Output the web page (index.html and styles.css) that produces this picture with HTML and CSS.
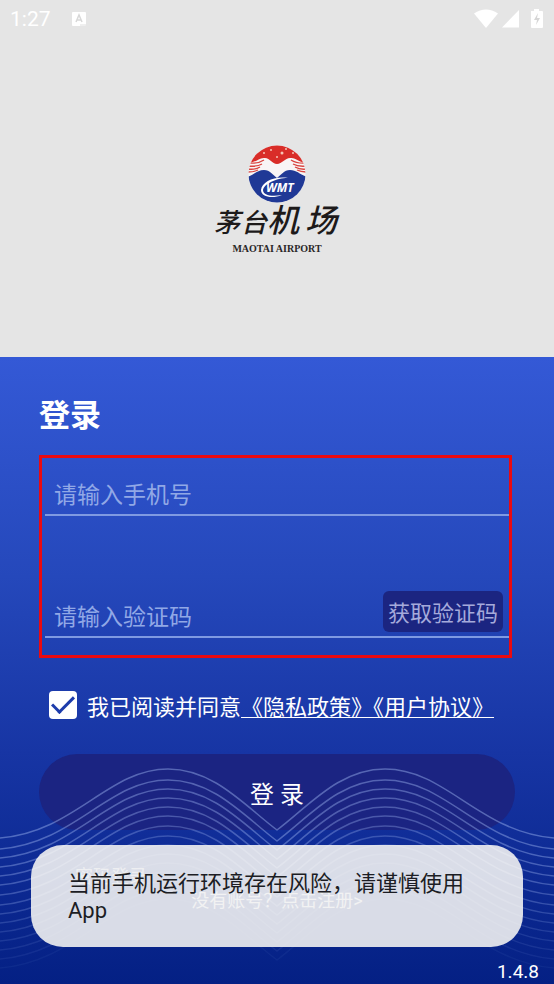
FILE: index.html
```html
<!DOCTYPE html>
<html lang="zh-CN">

<head>
    <meta charset="UTF-8" />
    <meta name="viewport" content="width=device-width, initial-scale=1.0" />
    <title>登录</title>
    <link rel="stylesheet" href="styles.css">
</head>

<body>
    <header class="top">
        <div class="status-bar">
            <span class="time">1:27</span>
            <svg class="app-icon" width="16" height="16" viewBox="0 0 16 16">
                <rect x="1" y="1" width="14" height="14" rx="1" fill="#fff" />
                <path d="M5 11 L8 4 L11 11 M6 9 H10" fill="none" stroke="#d8d8d8" stroke-width="1.5" />
                <path d="M9 14 H15" stroke="#dedede" />
            </svg>
            <svg class="signals" width="70" height="20" viewBox="0 0 70 20">
                <path d="M0 4.500 Q12 -3.500 24 4.500 L12 19 Z" fill="#fff" />
                <path d="M28 18.500 L45 1 V18.500 Z" fill="#fff" />
                <path d="M57 2 H60 V0 H65 V2 H68 Q69 2 69 3 V18 Q69 19 68 19 H58 Q57 19 57 18 V3 Z" fill="#fff" />
                <path d="M64 4 L60 11 H63 L62 16 L66 9 H63 Z" fill="#d6d6d6" />
            </svg>
        </div>
        <svg class="logo" width="132" height="112" viewBox="0 0 132 112">
            <defs>
                <clipPath id="ball"><circle cx="66" cy="30" r="28.500" /></clipPath>
            </defs>
            <g clip-path="url(#ball)">
                <rect x="36" y="0" width="60" height="60" fill="#f8f5f5" />
                <!-- sky -->
                <path d="M36 0 H97 V18 C88 20 86 13 79 14 C74 14 71 20 66 20 C61 20 59 14 54 14 C47 13 45 20 36 18 Z" fill="#d92d28" />
                <g fill="none" stroke="#d9453f" stroke-width="1.300">
                    <path d="M37 19 Q47 20 53 16 M37 22 Q46 23 51 20 M37 25 Q44 26 49 23 M37 28 Q43 28 47 26" />
                    <path d="M96 19 Q86 20 80 16 M96 22 Q87 23 82 20 M96 25 Q89 26 84 23 M96 28 Q90 28 86 26" />
                </g>
                <!-- mountains -->
                <path d="M36 33 C43 31 46 26 53 26 C59 26 62 31 66 34 C70 31 73 26 79 26 C86 26 89 31 97 33 V60 H36 Z" fill="#203996" />
                <g fill="#f6c4b5">
                    <circle cx="53" cy="9" r="1" />
                    <circle cx="60" cy="6" r="1" />
                    <circle cx="71" cy="9" r="1.500" />
                    <circle cx="75" cy="5" r="1" />
                    <circle cx="82" cy="9" r="1" />
                    <circle cx="66" cy="13" r="1" />
                </g>
                <path d="M77 34 C63 32 51 38 50 46 C50 53 61 55 71 51 C60 53 52 51 52 46 C53 40 65 34 77 34 Z" fill="#fff" />
            </g>
            <text class="logo-mark" x="55" y="48">WMT</text>
            <text class="logo-cn" y="88"><tspan x="3">茅</tspan><tspan x="30">台</tspan><tspan class="logo-cn-big" x="56">机</tspan><tspan class="logo-cn-big" x="94">场</tspan></text>
            <text class="logo-en" x="66" y="108">MAOTAI AIRPORT</text>
        </svg>
    </header>

    <main class="panel">
        <h1 class="title">登录</h1>
        <form>
            <div class="fields">
                <div class="field">
                    <input class="field-input" type="tel" placeholder="请输入手机号" aria-label="请输入手机号" />
                </div>
                <div class="field">
                    <input class="field-input" type="text" placeholder="请输入验证码" aria-label="请输入验证码" />
                    <button class="code-btn" type="button">获取验证码</button>
                </div>
            </div>
            <div class="agree">
                <input class="agree-check" type="checkbox" id="agree" checked />
                <label for="agree">我已阅读并同意</label><a class="agree-link" href="#">《隐私政策》《用户协议》</a>
            </div>
            <button class="login-btn" type="submit">登 录</button>
        </form>
        <a class="switch-link" href="#">密码登录</a>
        <a class="register-link" href="#">没有账号？点击注册&gt;</a>
        <div class="version">1.4.8</div>

        <svg class="waves" viewBox="0 0 554 230" preserveAspectRatio="none">
            <defs>
                <path id="wave" d="M0 84 C75 78 108 15 168 15 C214 15 245 52 277 76 C309 52 339 15 385 15 C446 15 479 78 554 84" />
            </defs>
            <g fill="none" stroke="#9db4f0" stroke-width="1.500">
                <use href="#wave" opacity="0.460" />
                <use href="#wave" y="11" opacity="0.440" />
                <use href="#wave" y="20" opacity="0.420" />
                <use href="#wave" y="29" opacity="0.400" />
                <use href="#wave" y="38" opacity="0.380" />
                <use href="#wave" y="47" opacity="0.360" />
                <use href="#wave" y="57" opacity="0.330" />
                <use href="#wave" y="67" opacity="0.300" />
                <use href="#wave" y="76" opacity="0.260" />
                <use href="#wave" y="85" opacity="0.220" />
                <use href="#wave" y="94" opacity="0.180" />
                <use href="#wave" y="103" opacity="0.150" />
                <use href="#wave" y="112" opacity="0.120" />
                <use href="#wave" y="121" opacity="0.090" />
                <use href="#wave" y="130" opacity="0.060" />
            </g>
        </svg>
        <div class="toast" role="alert">当前手机运行环境存在风险，请谨慎使用App</div>
    </main>
</body>

</html>
```
FILE: styles.css
```css
* {
    box-sizing: border-box;
}

body {
    margin: 0;
    min-height: 100vh;
    display: flex;
    flex-direction: column;
    background-color: #e5e5e5;
    color: white;
    font-family: Roboto, "Noto Sans CJK SC", sans-serif;
}

input,
button {
    font-family: inherit;
    color: inherit;
    border: none;
    outline: none;
}

a {
    color: inherit;
    text-decoration: none;
}

/* status bar + logo */
.top {
    display: flex;
    flex-direction: column;
    align-items: center;
    padding-bottom: 101px;
}

.status-bar {
    align-self: stretch;
    display: flex;
    align-items: center;
    height: 38px;
    padding: 0 10px;
}

.time {
    font-size: 21px;
}

.app-icon {
    margin-left: 20px;
}

.signals {
    margin-left: auto;
}

.logo {
    margin-top: 106px;
    overflow: visible;
}

.logo-mark {
    fill: white;
    font: italic bold 12px "Open Sans", sans-serif;
}

.logo-cn {
    fill: #1d1a1a;
    font: italic 500 26px STXingkai, "Noto Sans CJK SC", cursive;
}

.logo-cn-big {
    font-size: 32px;
}

.logo-en {
    fill: #2a2727;
    font: bold 10px "Liberation Serif", serif;
    text-anchor: middle;
}

/* login */
.panel {
    position: relative;
    flex: 1;
    display: flex;
    flex-direction: column;
    padding: 39px 39px 0;
    background: linear-gradient(#3459d6, #2548bb 35%, #1735a4 63%, #042084);
}

.title {
    margin: 0;
    font-size: 31px;
    line-height: 40px;
}

.fields {
    display: flex;
    flex-direction: column;
    gap: 75px;
    margin: 19px 3px 0 0;
    padding: 20px 0 17px 3px;
    border: 3px solid #ea0a10;
}

.field {
    display: flex;
    align-items: flex-end;
    border-bottom: 2px solid #7f9ae2;
}

.field-input {
    flex: 1;
    min-width: 0;
    height: 36px;
    padding: 0 9px 2px;
    background: none;
    font-size: 23px;
}

.field-input::placeholder {
    color: #91a8e6;
}

.code-btn {
    height: 41px;
    margin: 0 6px 4px 0;
    padding: 0 5px 2px;
    border-radius: 6px;
    background-color: #1b2581;
    color: #a5aadb;
    font-size: 22px;
}

.agree {
    display: flex;
    align-items: center;
    height: 28px;
    margin: 33px 0 35px 10px;
    font-size: 22px;
    white-space: nowrap;
}

.agree-check {
    appearance: none;
    display: grid;
    place-items: center;
    width: 28px;
    height: 28px;
    margin: 0 10px 0 0;
    border-radius: 4px;
    background-color: white;
}

.agree-check:checked::before {
    content: "";
    width: 19px;
    height: 9px;
    margin-bottom: 6px;
    border-left: 3px solid #1d3cab;
    border-bottom: 3px solid #1d3cab;
    transform: rotate(-45deg);
}

.agree-link {
    text-decoration: underline;
    text-decoration-thickness: 1px;
    text-underline-offset: 2px;
}

.login-btn {
    width: 100%;
    height: 76px;
    border-radius: 38px;
    background-color: #1b2482;
    font-size: 24px;
}

.switch-link {
    margin: 35px 0 0 36px;
    font-size: 18px;
    line-height: 24px;
    opacity: 0.6;
}

.register-link {
    align-self: center;
    font-size: 18px;
    line-height: 24px;
    opacity: 0.7;
}

.version {
    margin: auto -24px 0 0;
    font-size: 19px;
    line-height: 24px;
    text-align: right;
}

.waves {
    position: absolute;
    left: 0;
    bottom: 0;
    width: 100%;
    height: 230px;
    pointer-events: none;
}

.toast {
    position: absolute;
    left: 31px;
    right: 31px;
    bottom: 37px;
    padding: 25px 37px 23px;
    border-radius: 32px;
    background-color: rgba(252, 250, 246, 0.86);
    color: #1c1d24;
    font-size: 22px;
    line-height: 27px;
}
```
